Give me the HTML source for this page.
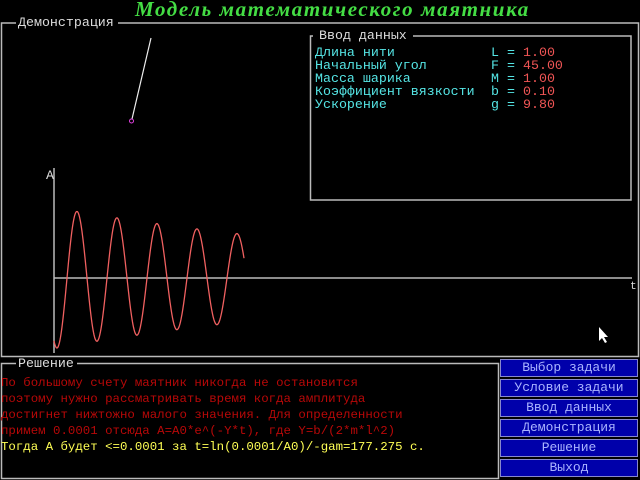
<!DOCTYPE html>
<html><head><meta charset="utf-8"><style>
body{margin:0;width:640px;height:480px;background:#000;overflow:hidden;position:relative;font-family:"Liberation Mono","DejaVu Sans Mono",monospace;}
.t{position:absolute;white-space:pre;font-size:13.3px;line-height:13px;}
.btn{position:absolute;left:500px;width:136px;height:16px;background:#0000aa;border:1px solid #8888cc;color:#aab4ff;font-size:13px;line-height:16px;text-align:center;font-family:"Liberation Mono",monospace;}
</style></head><body>
<svg width="640" height="480" style="position:absolute;left:0;top:0">
<g stroke="#bbb" fill="none" stroke-width="1.5">
<polyline points="118,23 638.5,23 638.5,356.5 1.5,356.5 1.5,23 16,23"/>
<polyline points="413,36 631,36 631,200 310.5,200 310.5,36 313,36"/>
<polyline points="77,363.5 498.5,363.5 498.5,478.5 1.5,478.5 1.5,363.5 16,363.5"/>
<line x1="54" y1="168" x2="54" y2="353"/>
<line x1="54" y1="278" x2="632" y2="278"/>
</g>
<line x1="151" y1="38" x2="132" y2="119" stroke="#eee" stroke-width="1.2"/>
<circle cx="131.5" cy="121" r="2" stroke="#e040e0" fill="none" stroke-width="1"/>
<path id="c" stroke="#f06060" fill="none" stroke-width="1.3" d=""/>
<path d="M599,327 l0,14 l3,-3 l3,5 l2,-1 l-3,-5 l4,0 z" fill="#fff"/>
</svg>
<script>
var d="";for(var x=54;x<=244;x+=0.5){var A=70*Math.exp(-0.00253*(x-57));var y=278+A*Math.cos(2*Math.PI*(x-57)/40);d+=(x==54?"M":"L")+x+","+y.toFixed(1);}
document.getElementById("c").setAttribute("d",d);
</script>
<div style="position:absolute;left:135px;top:-3px;width:420px;font-family:'Liberation Serif',serif;font-style:italic;font-weight:bold;font-size:21px;color:#44dd44;letter-spacing:1.6px;white-space:nowrap">Модель математического маятника</div>
<div class="t" style="left:18px;top:16px;color:#ddd">Демонстрация</div>
<div class="t" style="left:319px;top:29px;color:#ddd">Ввод данных</div>
<div class="t" style="left:315px;top:46px;color:#55e5e5">Длина нити
Начальный угол
Масса шарика
Коэффициент вязкости
Ускорение</div>
<div class="t" style="left:491px;top:46px;color:#55e5e5">L =
F =
M =
b =
g =</div>
<div class="t" style="left:523px;top:46px;color:#f05555">1.00
45.00
1.00
0.10
9.80</div>
<div class="t" style="left:46px;top:169px;color:#ddd">A</div>
<div class="t" style="left:630px;top:281px;color:#ddd;font-size:11px">t</div>
<div class="t" style="left:18px;top:357px;color:#ddd">Решение</div>
<div class="t" style="left:1px;top:375px;line-height:16px;font-size:12.4px;color:#b80808">По большому счету маятник никогда не остановится
поэтому нужно рассматривать время когда амплитуда
достигнет нижтожно малого значения. Для определенности
примем 0.0001 отсюда A=A0*e^(-Y*t), где Y=b/(2*m*l^2)</div>
<div class="t" style="left:1px;top:439px;line-height:16px;font-size:12.4px;color:#ffff55">Тогда A будет &lt;=0.0001 за t=ln(0.0001/A0)/-gam=177.275 c.</div>
<div class="btn" style="top:359px">Выбор задачи</div>
<div class="btn" style="top:379px">Условие задачи</div>
<div class="btn" style="top:399px">Ввод данных</div>
<div class="btn" style="top:419px">Демонстрация</div>
<div class="btn" style="top:439px">Решение</div>
<div class="btn" style="top:459px">Выход</div>
</body></html>
